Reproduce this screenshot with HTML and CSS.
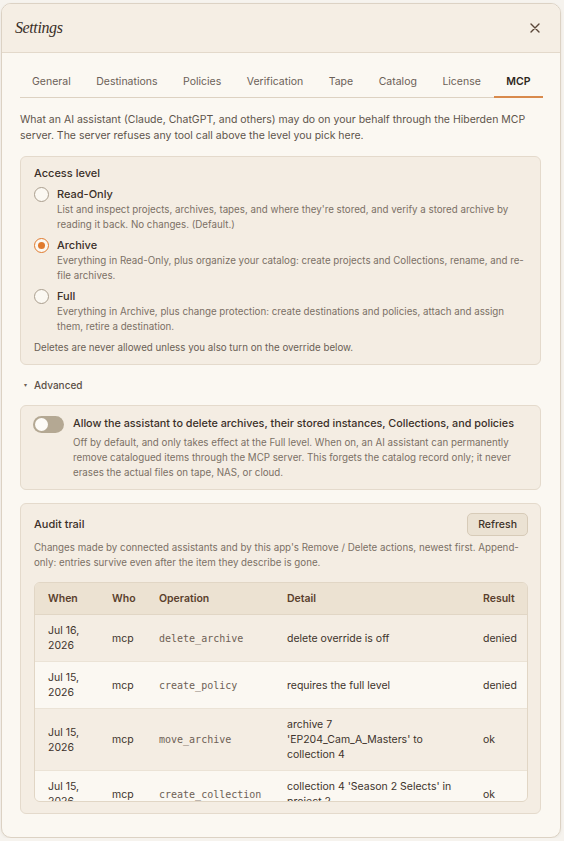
FILE: index.html
```html
<!DOCTYPE html>
<html lang="en">
<head>
  <meta charset="UTF-8">
  <meta name="viewport" content="width=device-width, initial-scale=1.0">
  <title>Settings</title>
  <link rel="stylesheet" href="styles.css">
</head>
<body>

<div class="dialog">
  <div class="dialog-header">
    <h1 class="dialog-title">Settings</h1>
    <button class="close-button" aria-label="Close">
      <svg width="10" height="10" viewBox="0 0 10 10"><path d="M1 1L9 9M9 1L1 9" stroke="#5a4638" stroke-width="1.4" stroke-linecap="round"/></svg>
    </button>
  </div>

  <div class="dialog-body">
    <div class="tabs">
      <span class="tab">General</span>
      <span class="tab">Destinations</span>
      <span class="tab">Policies</span>
      <span class="tab">Verification</span>
      <span class="tab">Tape</span>
      <span class="tab">Catalog</span>
      <span class="tab">License</span>
      <span class="tab active">MCP</span>
    </div>

    <p class="intro">What an AI assistant (Claude, ChatGPT, and others) may do on your behalf through the Hiberden MCP server. The server refuses any tool call above the level you pick here.</p>

    <div class="panel access-panel">
      <div class="panel-title">Access level</div>

      <label class="option">
        <span class="radio"></span>
        <span class="option-text">
          <span class="option-label">Read-Only</span>
          <span class="option-desc">List and inspect projects, archives, tapes, and where they're stored, and verify a stored archive by reading it back. No changes. (Default.)</span>
        </span>
      </label>

      <label class="option">
        <span class="radio checked"></span>
        <span class="option-text">
          <span class="option-label">Archive</span>
          <span class="option-desc">Everything in Read-Only, plus organize your catalog: create projects and Collections, rename, and re-file archives.</span>
        </span>
      </label>

      <label class="option">
        <span class="radio"></span>
        <span class="option-text">
          <span class="option-label">Full</span>
          <span class="option-desc">Everything in Archive, plus change protection: create destinations and policies, attach and assign them, retire a destination.</span>
        </span>
      </label>

      <div class="panel-note">Deletes are never allowed unless you also turn on the override below.</div>
    </div>

    <div class="advanced"><span class="caret">&#9662;</span>Advanced</div>

    <div class="panel toggle-panel">
      <span class="toggle"><span class="knob"></span></span>
      <div class="option-text">
        <span class="toggle-label">Allow the assistant to delete archives, their stored instances, Collections, and policies</span>
        <span class="option-desc">Off by default, and only takes effect at the Full level. When on, an AI assistant can permanently remove catalogued items through the MCP server. This forgets the catalog record only; it never erases the actual files on tape, NAS, or cloud.</span>
      </div>
    </div>

    <div class="panel audit-panel">
      <div class="audit-head">
        <div class="panel-title">Audit trail</div>
        <button class="refresh-button">Refresh</button>
      </div>
      <p class="audit-desc">Changes made by connected assistants and by this app's Remove / Delete actions, newest first. Append-only: entries survive even after the item they describe is gone.</p>

      <div class="table-wrap">
        <table class="audit-table">
          <colgroup>
            <col class="col-when">
            <col class="col-who">
            <col class="col-op">
            <col class="col-detail">
            <col>
          </colgroup>
          <thead>
            <tr><th>When</th><th>Who</th><th>Operation</th><th>Detail</th><th>Result</th></tr>
          </thead>
          <tbody>
            <tr>
              <td>Jul 16, 2026</td><td>mcp</td><td class="op">delete_archive</td><td>delete override is off</td><td>denied</td>
            </tr>
            <tr>
              <td>Jul 15, 2026</td><td>mcp</td><td class="op">create_policy</td><td>requires the full level</td><td>denied</td>
            </tr>
            <tr>
              <td>Jul 15, 2026</td><td>mcp</td><td class="op">move_archive</td><td>archive 7 'EP204_Cam_A_Masters' to collection 4</td><td>ok</td>
            </tr>
            <tr>
              <td>Jul 15, 2026</td><td>mcp</td><td class="op">create_collection</td><td>collection 4 'Season 2 Selects' in project 2</td><td>ok</td>
            </tr>
          </tbody>
        </table>
      </div>
    </div>
  </div>
</div>

</body>
</html>
```

FILE: styles.css
```css
body {
  margin: 0;
  background: #f6f3ee;
  font-family: Inter, "Liberation Sans", sans-serif;
  color: #3b3029;
}

.dialog {
  margin: 3px 0 0 1px;
  width: 558px;
  height: 833px;
  background: #fbf8f2;
  border: 1px solid #dcd2c4;
  border-radius: 10px;
  overflow: hidden;
  display: flex;
  flex-direction: column;
  box-shadow: 0 1px 3px rgba(80, 60, 40, 0.08);
}

.dialog-header {
  height: 48px;
  flex-shrink: 0;
  display: flex;
  align-items: center;
  justify-content: space-between;
  padding: 0 19px 0 13px;
  background: #f5eee4;
  border-bottom: 1px solid #e3d9cb;
}

.dialog-title {
  margin: 0;
  font-family: "Liberation Serif", serif;
  font-style: italic;
  font-weight: normal;
  font-size: 16px;
  letter-spacing: -0.4px;
  color: #3a2f28;
}

.close-button {
  border: none;
  background: none;
  padding: 0;
  width: 12px;
  height: 12px;
  display: flex;
  align-items: center;
  justify-content: center;
}

.dialog-body {
  padding: 13px 19px 0 18px;
  overflow: hidden;
}

.tabs {
  display: flex;
  border-bottom: 1px solid #ddd2c2;
}

.tab {
  padding: 9px 12px 7px;
  font-size: 10.5px;
  line-height: 14px;
  color: #6b6057;
  border-bottom: 2px solid transparent;
  margin-bottom: -1px;
}

.tab + .tab {
  margin-left: 1.5px;
}

.tab.active {
  color: #2e2620;
  font-weight: 600;
  border-bottom-color: #d98a4c;
}

.intro {
  margin: 14px 0 13px;
  font-size: 10.5px;
  line-height: 15.5px;
  color: #5e544b;
}

.panel {
  background: #f4ede3;
  border: 1px solid #e4dacc;
  border-radius: 6px;
}

.access-panel {
  padding: 9px 13px 9px;
  display: flex;
  flex-direction: column;
  gap: 6px;
}

.panel-title {
  font-size: 11px;
  line-height: 15px;
  font-weight: 500;
  color: #3b3029;
}

.option {
  display: flex;
  gap: 8px;
  align-items: flex-start;
}

.radio {
  width: 15px;
  height: 15px;
  box-sizing: border-box;
  border: 1.5px solid #aa9e8e;
  border-radius: 50%;
  background: #fbf8f2;
  flex-shrink: 0;
  display: flex;
  align-items: center;
  justify-content: center;
}

.radio.checked {
  border-color: #e07a2e;
}

.radio.checked::after {
  content: "";
  width: 7px;
  height: 7px;
  border-radius: 50%;
  background: #e07a2e;
}

.option-text {
  display: flex;
  flex-direction: column;
}

.option-label {
  font-size: 11px;
  line-height: 15px;
  font-weight: 500;
  color: #3b3029;
}

.option-desc {
  font-size: 9.75px;
  line-height: 15px;
  color: #7b7065;
}

.panel-note {
  font-size: 9.75px;
  line-height: 15px;
  color: #6a5f55;
}

.advanced {
  margin: 12px 0 12px 4px;
  font-size: 10px;
  line-height: 15px;
  font-weight: 500;
  color: #5a4f46;
}

.caret {
  font-size: 6px;
  color: #6b5f55;
  margin-right: 7px;
  vertical-align: 2px;
}

.toggle-panel {
  display: flex;
  gap: 9px;
  padding: 10px 12px 9px;
}

.toggle {
  width: 31px;
  height: 17px;
  border-radius: 9px;
  background: #b4a893;
  flex-shrink: 0;
  position: relative;
}

.knob {
  position: absolute;
  left: 2px;
  top: 2px;
  width: 13px;
  height: 13px;
  border-radius: 50%;
  background: #fdfbf7;
}

.toggle-label {
  font-size: 10.8px;
  line-height: 15px;
  font-weight: 500;
  color: #3b3029;
  margin-bottom: 4px;
}

.audit-panel {
  margin-top: 13px;
  padding: 9px 12px 11px 13px;
}

.audit-head {
  display: flex;
  align-items: center;
  justify-content: space-between;
}

.refresh-button {
  font-family: inherit;
  font-size: 10.5px;
  font-weight: 500;
  color: #3d322a;
  background: #ebe2d3;
  border: 1px solid #d7cbb8;
  border-radius: 5px;
  padding: 0 10px;
  height: 23px;
}

.audit-desc {
  margin: 5px 0 12px;
  font-size: 9.75px;
  line-height: 14.5px;
  color: #7b7065;
}

.table-wrap {
  height: 218px;
  overflow-y: auto;
  scrollbar-width: none;
  border: 1px solid #e1d6c5;
  border-radius: 6px;
}

.audit-table {
  width: 100%;
  border-collapse: collapse;
  table-layout: fixed;
  font-size: 10.5px;
}

.col-when {
  width: 64px;
}

.col-who {
  width: 47px;
}

.col-op {
  width: 128px;
}

.col-detail {
  width: 196px;
}

.audit-table th {
  text-align: left;
  background: #ece2d2;
  color: #5a3f2d;
  font-weight: 600;
  padding: 8px 13px;
  line-height: 15px;
  border-bottom: 1px solid #e1d6c5;
}

.audit-table td {
  padding: 8px 13px;
  line-height: 15px;
  color: #3d332b;
  vertical-align: middle;
  border-top: 1px solid #ebe3d6;
}

.audit-table tbody tr:nth-child(odd) td {
  background: #f4ede3;
}

.audit-table tbody tr:nth-child(even) td {
  background: #fbf8f2;
}

.audit-table td.op {
  font-family: "DejaVu Sans Mono", monospace;
  font-size: 10px;
  color: #6e6155;
}
```
